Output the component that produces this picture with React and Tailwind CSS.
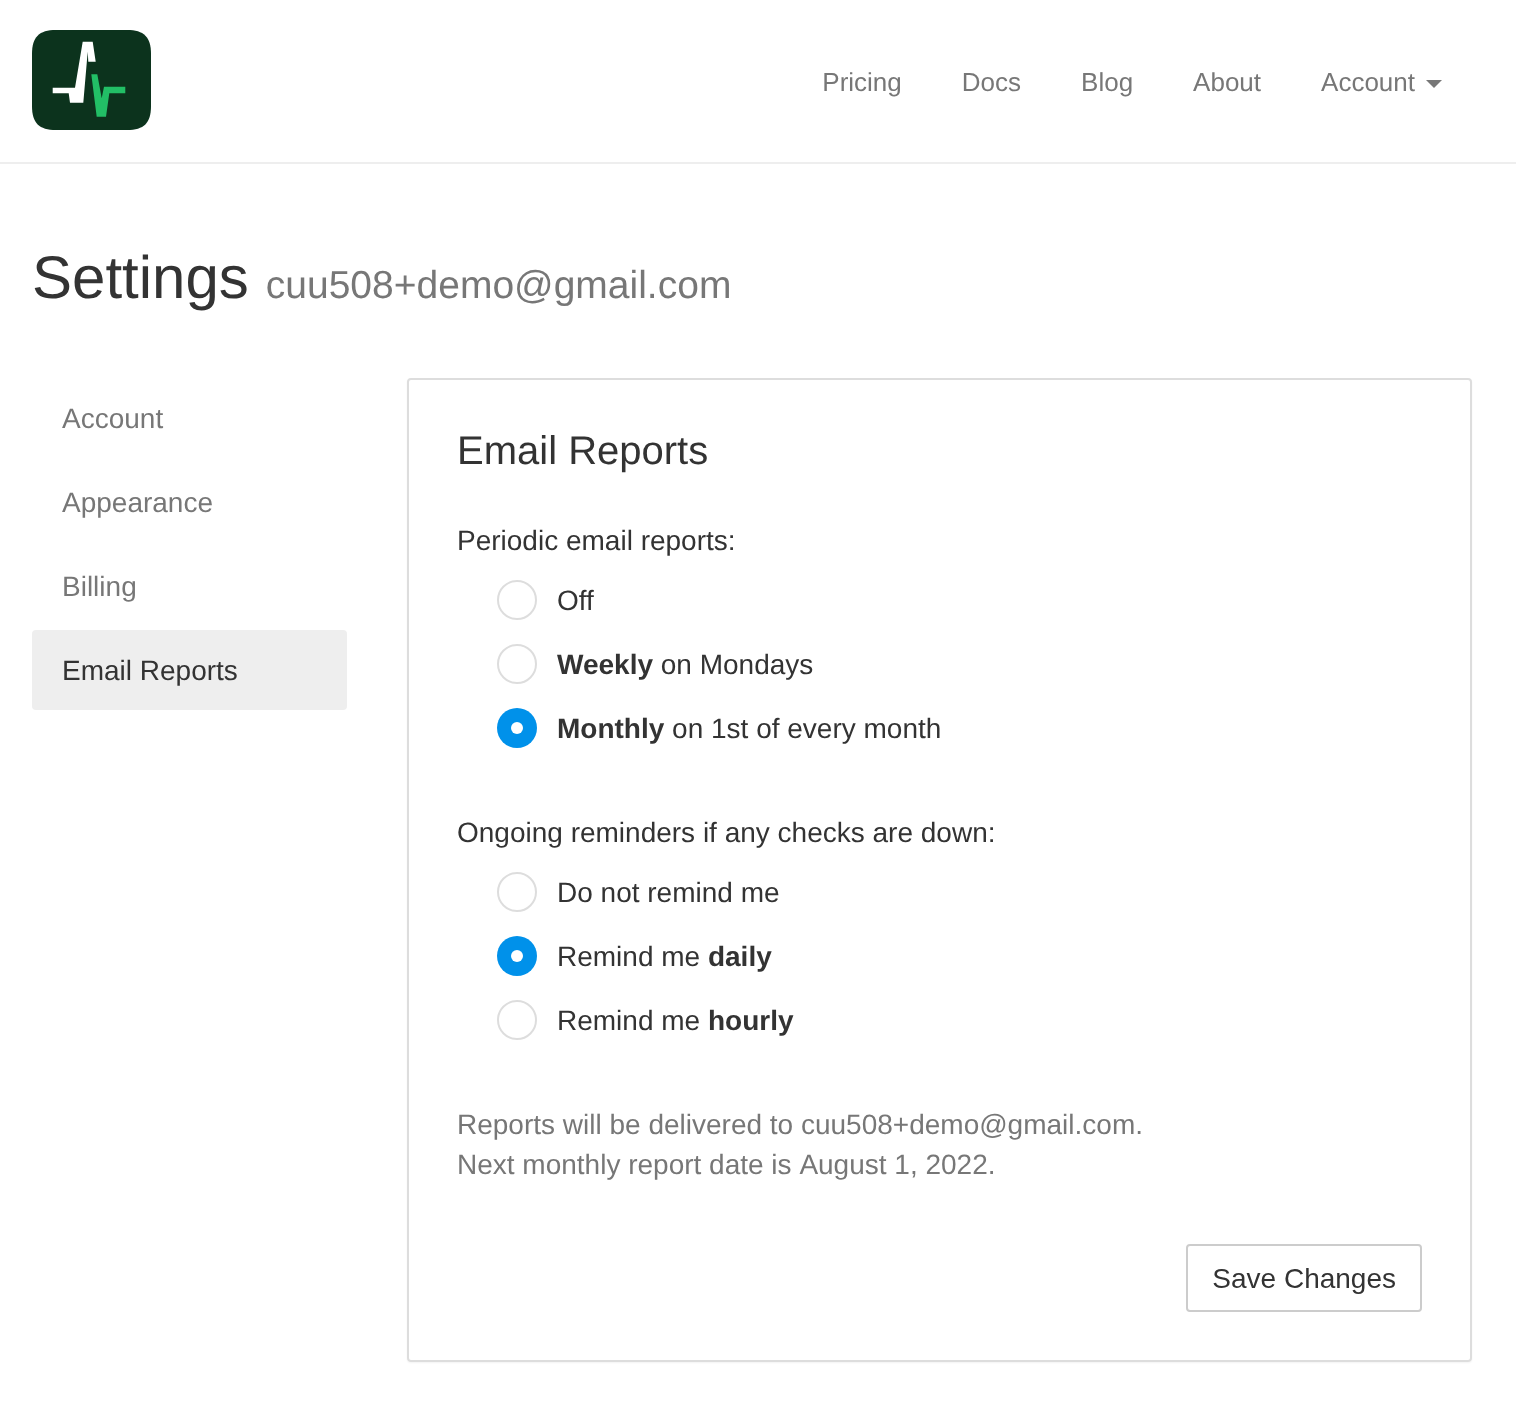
const sideLinks = ["Account", "Appearance", "Billing"];

function Logo() {
  return (
    <svg viewBox="0 0 119 100" className="w-[119px] h-[100px] block" aria-hidden="true">
      <path d="M24 0H95C112 0 119 7 119 24V76C119 93 112 100 95 100H24C7 100 0 93 0 76V24C0 7 7 0 24 0Z" fill="#0c331d" />
      <path d="M20.700 57.700H43L50.700 11.700H60.700L63.700 31.700H56.300L55.700 21.700L51.300 72.700H38L36.700 63.300H20.700Z" fill="#fff" />
      <path d="M59.300 44.300H65.300L69.700 68.300L72 56.700H93.300V63.300H77.300L74 86.700H64.700Z" fill="#22bf66" />
    </svg>
  );
}

function Radio({ checked, children }) {
  return (
    <label className="flex items-start h-10 mb-6 pl-10 last:mb-0">
      <span
        className={
          checked
            ? "-mt-px w-10 h-10 rounded-full bg-[#0091ea] flex items-center justify-center shrink-0"
            : "-mt-px w-10 h-10 rounded-full border-2 border-[#dddddd] bg-white shrink-0"
        }
      >
        {checked && <span className="w-3 h-3 rounded-full bg-white" />}
      </span>
      <span className="ml-5">{children}</span>
    </label>
  );
}

export default function App() {
  return (
    <div className="min-h-[1402px] text-[28px] leading-10 text-[#333333] font-['Liberation_Sans',Arial,sans-serif] [text-rendering:geometricPrecision] will-change-transform">
      {/* Navbar */}
      <nav className="h-[164px] border-b-2 border-[#eeeeee] pl-8 pr-[74px] pt-[30px] flex justify-between">
        <Logo />
        <div className="flex gap-[60px] pt-[32px] h-10 text-[26px] text-[#777777] box-content">
          <a>Pricing</a>
          <a>Docs</a>
          <a>Blog</a>
          <a>About</a>
          <a className="flex items-center">
            Account
            <span className="ml-[11px] mt-1 w-0 h-0 border-x-8 border-t-8 border-x-transparent border-t-[#777777]" />
          </a>
        </div>
      </nav>

      {/* Title */}
      <h1 className="ml-8 mt-[75px] h-[79px] text-[60px] leading-[78px] flex items-baseline">
        Settings
        <small className="ml-[17px] text-[39px] leading-none text-[#777777]">cuu508+demo@gmail.com</small>
      </h1>

      <div className="flex mt-[60px] pl-8 pr-[44px]">
        {/* Sidebar */}
        <ul className="w-[315px] shrink-0 mr-[60px] flex flex-col gap-1">
          {sideLinks.map((name) => (
            <li key={name} className="h-20 px-[30px] pt-0.5 flex items-center text-[#777777]">{name}</li>
          ))}
          <li className="h-20 px-[30px] pt-0.5 flex items-center bg-[#eeeeee] rounded-[4px]">Email Reports</li>
        </ul>

        {/* Panel */}
        <section className="flex-1 h-[984px] border-2 border-[#dddddd] rounded-[4px] pt-[48px] px-12 shadow-[0_1px_2px_rgba(0,0,0,0.05)]">
          <h2 className="text-[40px] leading-[46px]">Email Reports</h2>

          <p className="mt-[47px] mb-5">Periodic email reports:</p>
          <Radio>Off</Radio>
          <Radio><b>Weekly</b> on Mondays</Radio>
          <Radio checked><b>Monthly</b> on 1st of every month</Radio>

          <p className="mt-[64px] mb-5">Ongoing reminders if any checks are down:</p>
          <Radio>Do not remind me</Radio>
          <Radio checked>Remind me <b>daily</b></Radio>
          <Radio>Remind me <b>hourly</b></Radio>

          <p className="mt-[64px] text-[#777777]">
            Reports will be delivered to cuu508+demo@gmail.com.
            <br />
            Next monthly report date is <span className="inline-block">August 1, 2022.</span>
          </p>

          <div className="flex justify-end mt-[59px]">
            <button className="h-[68px] px-6 pt-0.5 border-2 border-[#cccccc] rounded-[4px] bg-white">Save Changes</button>
          </div>
        </section>
      </div>
    </div>
  );
}
